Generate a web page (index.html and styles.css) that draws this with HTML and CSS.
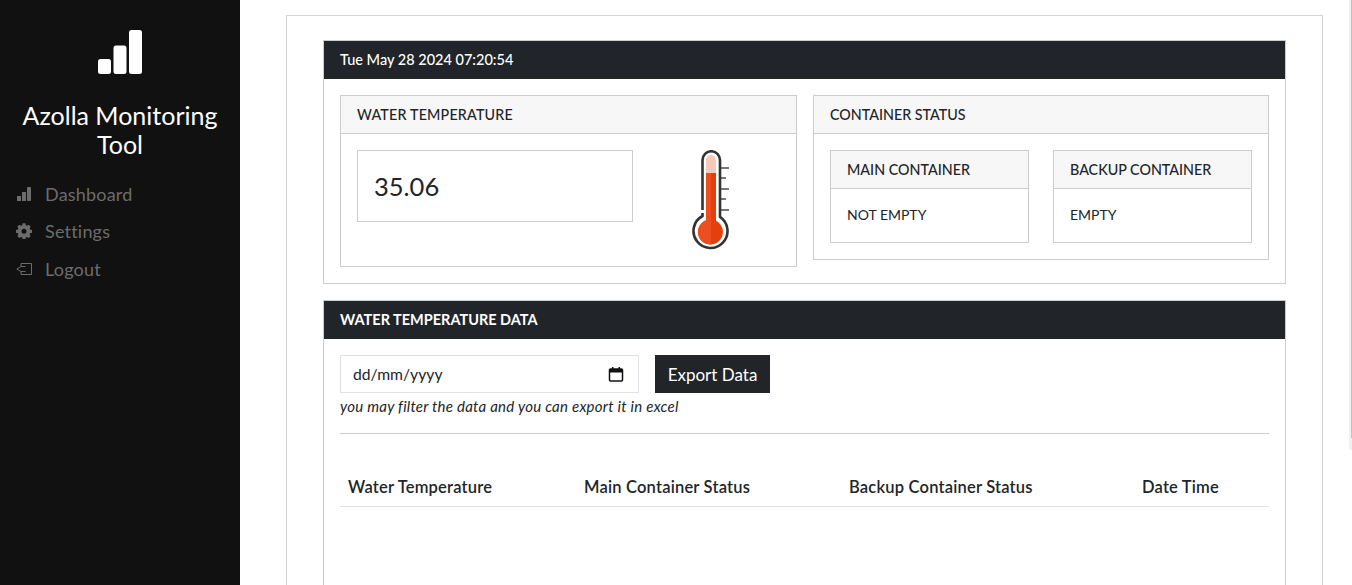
FILE: index.html
```html
<!DOCTYPE html>
<html lang="en">
<head>
    <meta charset="UTF-8">
    <title>Azolla Monitoring Tool</title>
    <link rel="stylesheet" href="styles.css">
</head>
<body>
    <aside class="sidebar">
        <div class="brand">
            <svg class="brand-icon" width="44" height="44" viewBox="0 0 44 44" fill="#fff">
                <rect x="0" y="29" width="13" height="15" rx="2.5"/>
                <rect x="15.5" y="15.5" width="13" height="28.5" rx="2.5"/>
                <rect x="31" y="0" width="13" height="44" rx="2.5"/>
            </svg>
            <h1>Azolla Monitoring Tool</h1>
        </div>
        <nav class="menu">
            <a href="#">
                <svg width="16" height="16" viewBox="0 0 16 16" fill="#6c6c6c">
                    <rect x="1" y="10" width="4" height="5"/>
                    <rect x="6" y="6" width="4" height="9"/>
                    <rect x="11" y="1" width="4" height="14" rx="1"/>
                </svg>
                Dashboard
            </a>
            <a href="#">
                <svg width="16" height="16" viewBox="0 0 16 16" fill="#6c6c6c">
                    <path fill-rule="evenodd" d="M6.600.3h2.800l.4 2 1.200.5 1.700-1.100 2 2-1.100 1.700.5 1.200 2 .4v2.800l-2 .4-.5 1.200 1.100 1.700-2 2-1.700-1.100-1.200.5-.4 2H6.600l-.4-2-1.200-.5-1.700 1.100-2-2L2.400 11.400l-.5-1.200-2-.4V7l2-.4.5-1.200L1.300 3.700l2-2L5 2.800l1.200-.5zM8 5.700a2.500 2.500 0 1 0 0 5 2.500 2.500 0 0 0 0-5z"/>
                </svg>
                Settings
            </a>
            <a href="#">
                <svg width="16" height="16" viewBox="0 0 16 16" fill="none" stroke="#6c6c6c" stroke-width="1">
                    <path d="M5 5V2.500h10.500v11H5V11"/>
                    <path d="M9.500 5.500H5L.8 8 5 10.500h4.500"/>
                </svg>
                Logout
            </a>
        </nav>
    </aside>

    <main class="content">
        <div class="outer">
            <section class="card">
                <div class="card-dark">Tue May 28 2024 07:20:54</div>
                <div class="card-body status-row">
                    <div class="card temp-card">
                        <div class="card-head">WATER TEMPERATURE</div>
                        <div class="card-body temp-body">
                            <div class="temp-value">35.06</div>
                            <svg class="thermo" width="40" height="102" viewBox="0 0 40 102">
                                <path d="M31 18h8M31 28h5M31 39h8M31 49h5M31 60h8" stroke="#777" stroke-width="1.800" fill="none"/>
                                <path d="M12.500 60V10a8.750 8.750 0 0 1 17.500 0v56.900A17 17 0 1 1 12.500 66v-3" fill="none" stroke="#333" stroke-width="2.600"/>
                                <path d="M16 23V10a5 5 0 0 1 10 0v13z" fill="#f6c9ba"/>
                                <path d="M16 23h10v47.800A12.500 12.500 0 1 1 16 70.300z" fill="#e63f0e"/>
                                <path d="M21 23H16v47.300A12.500 12.500 0 0 0 21 94.500z" fill="#ec4f1f"/>
                            </svg>
                        </div>
                    </div>
                    <div class="card">
                        <div class="card-head">CONTAINER STATUS</div>
                        <div class="card-body container-row">
                            <div class="card">
                                <div class="card-head">MAIN CONTAINER</div>
                                <div class="card-body small-text">NOT EMPTY</div>
                            </div>
                            <div class="card">
                                <div class="card-head">BACKUP CONTAINER</div>
                                <div class="card-body small-text">EMPTY</div>
                            </div>
                        </div>
                    </div>
                </div>
            </section>

            <section class="card data-card">
                <div class="card-dark data-title">WATER TEMPERATURE DATA</div>
                <div class="card-body">
                    <div class="filter">
                        <div class="date-input">
                            <span>dd/mm/yyyy</span>
                            <svg width="16" height="16" viewBox="0 0 16 16">
                                <path d="M2.500 3h11a1 1 0 0 1 1 1v10a1 1 0 0 1-1 1h-11a1 1 0 0 1-1-1V4a1 1 0 0 1 1-1z" fill="none" stroke="#111" stroke-width="1.500"/>
                                <path d="M1.500 3h13v3.500h-13zM4 1h1.500v2H4zM10.500 1H12v2h-1.500z" fill="#111"/>
                            </svg>
                        </div>
                        <button type="button">Export Data</button>
                    </div>
                    <p class="hint">you may filter the data and you can export it in excel</p>
                    <hr>
                    <table>
                        <thead>
                            <tr>
                                <th class="col-temp">Water Temperature</th>
                                <th class="col-main">Main Container Status</th>
                                <th class="col-backup">Backup Container Status</th>
                                <th>Date Time</th>
                            </tr>
                        </thead>
                    </table>
                </div>
            </section>
        </div>
    </main>
    <div class="scroll-track"><div class="scroll-thumb"></div></div>
</body>
</html>
```

FILE: styles.css
```css
* {
    box-sizing: border-box;
}

html,
body {
    height: 100%;
    margin: 0;
    overflow: hidden;
}

body {
    display: flex;
    font-family: Lato, "Noto Sans", sans-serif;
    color: #212529;
    background-color: #fff;
}

.sidebar {
    flex: 0 0 240px;
    background-color: #111;
    color: #fff;
}

.brand {
    padding-top: 30px;
    text-align: center;
}

.brand-icon {
    display: block;
    margin: 0 auto 27px 98px;
}

.brand h1 {
    margin: 0;
    padding: 0 16px;
    font-size: 25px;
    font-weight: 400;
    line-height: 29px;
}

.menu {
    margin-top: 16px;
}

.menu a {
    display: flex;
    align-items: center;
    gap: 13px;
    height: 37.500px;
    padding-left: 16px;
    color: #6c6c6c;
    font-size: 18px;
    letter-spacing: .2px;
    text-decoration: none;
}

.content {
    flex: 1;
    padding: 15px 29px 0 46px;
    min-width: 0;
}

.outer {
    height: 700px;
    padding: 24px 36px;
    border: 1px solid #d4d4d4;
}

.card {
    border: 1px solid #ccc;
    background-color: #fff;
}

.card-dark {
    height: 38px;
    padding-left: 16px;
    background-color: #212529;
    color: #fff;
    font-size: 14.500px;
    font-weight: 500;
    line-height: 37px;
}

.data-title {
    font-weight: 700;
}

.card-head {
    height: 38px;
    padding-left: 16px;
    background-color: #f7f7f7;
    border-bottom: 1px solid #ccc;
    font-size: 14.300px;
    font-weight: 500;
    line-height: 37px;
}

.temp-card > .card-head {
    letter-spacing: .18px;
}

.card-body {
    padding: 16px;
}

.status-row {
    display: grid;
    grid-template-columns: 457px 456px;
    gap: 16px;
    align-items: start;
}

.temp-body {
    display: flex;
    height: 132px;
}

.temp-value {
    width: 276px;
    height: 72px;
    padding-left: 16px;
    border: 1px solid #ccc;
    font-size: 25.500px;
    line-height: 70px;
}

.thermo {
    margin-left: 57px;
}

.container-row {
    display: grid;
    grid-template-columns: 199px 199px;
    gap: 24px;
}

.small-text {
    height: 53px;
    padding-top: 16px;
    font-size: 14px;
    line-height: 19px;
}

.data-card {
    margin-top: 16px;
    min-height: 400px;
}

.filter {
    display: flex;
    gap: 16px;
}

.date-input {
    display: flex;
    align-items: center;
    justify-content: space-between;
    width: 299px;
    height: 38px;
    padding: 0 14px 0 12px;
    border: 1px solid #dee2e6;
    font-size: 15.700px;
}

button {
    width: 115px;
    height: 38px;
    padding: 0;
    border: none;
    background-color: #212529;
    color: #fff;
    font-family: inherit;
    font-size: 17px;
}

.hint {
    margin: 3px 0 0;
    font-size: 15px;
    font-style: italic;
    letter-spacing: .25px;
    line-height: 20px;
}

hr {
    margin: 17px 0 0;
    border: none;
    border-top: 1px solid #ccc;
}

table {
    width: 100%;
    margin-top: 31px;
    border-collapse: collapse;
    table-layout: fixed;
}

th {
    height: 41px;
    padding: 3px 8px 0;
    border-bottom: 1px solid #dee2e6;
    font-size: 16.500px;
    font-weight: 600;
    letter-spacing: .2px;
    text-align: left;
}

.col-temp {
    width: 236px;
}

.col-main {
    width: 265px;
}

.col-backup {
    width: 293px;
}

.scroll-track {
    position: fixed;
    top: 0;
    right: 0;
    width: 3px;
    height: 450px;
    background-color: #f1f1f1;
}

.scroll-thumb {
    width: 1px;
    height: 438px;
    margin-left: 2px;
    background-color: #c1c1c1;
}
```
